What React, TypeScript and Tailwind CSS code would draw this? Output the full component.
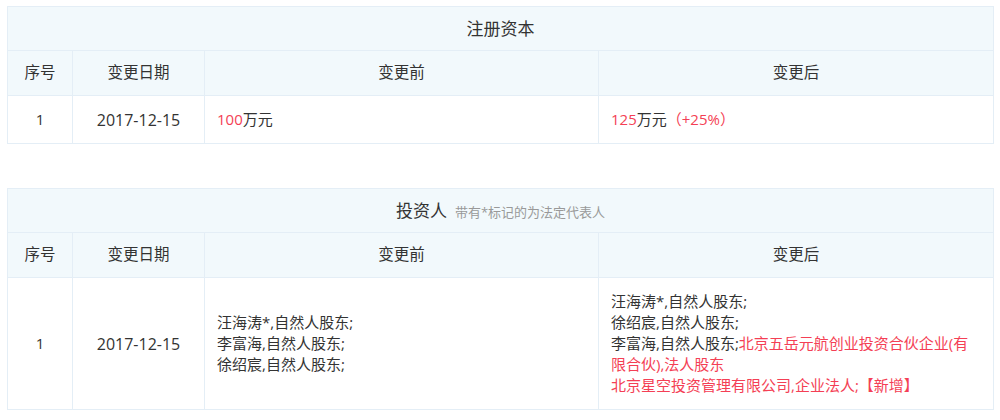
const RED = "text-[#f43f55]";

type Column = { label: string; width: string };

const columns: Column[] = [
    { label: "序号", width: "w-[65px]" },
    { label: "变更日期", width: "w-[132px]" },
    { label: "变更前", width: "w-[394px]" },
    { label: "变更后", width: "w-[395px]" },
];

function ChangeTable({
    title,
    note,
    before,
    after,
    bodyHeight,
}: {
    title: string;
    note?: string;
    before: React.ReactNode;
    after: React.ReactNode;
    bodyHeight: string;
}) {
    return (
        <table className="w-[986px] table-fixed border-collapse text-[15px] text-[#333]">
            <colgroup>
                {columns.map((c) => (
                    <col key={c.label} className={c.width} />
                ))}
            </colgroup>
            <thead>
                <tr className="h-[44px] bg-[#f2f9fc]">
                    <th colSpan={4} className="border border-[#e4eef6] text-center font-normal">
                        <span className="text-[17px] text-[#333]">{title}</span>
                        {note && <span className="ml-[8px] text-[13px] text-[#999]">{note}</span>}
                    </th>
                </tr>
                <tr className="h-[45px] bg-[#f2f9fc]">
                    {columns.map((c) => (
                        <th key={c.label} className="border border-[#e4eef6] text-center font-normal text-[15.5px] text-[#333]">
                            {c.label}
                        </th>
                    ))}
                </tr>
            </thead>
            <tbody>
                <tr className={bodyHeight}>
                    <td className="border border-[#e4eef6] text-center">1</td>
                    <td className="border border-[#e4eef6] text-center text-[16px]">2017-12-15</td>
                    <td className="border border-[#e4eef6] px-3 leading-[21px]">{before}</td>
                    <td className="whitespace-nowrap border border-[#e4eef6] px-3 leading-[21px]">{after}</td>
                </tr>
            </tbody>
        </table>
    );
}

export default function App() {
    return (
        <div
            className="flex min-h-[420px] w-[1000px] flex-col gap-[44px] bg-white px-[7px] pt-[6px]"
            style={{ fontFamily: '"Open Sans", "Noto Sans CJK SC", sans-serif' }}
        >
            <ChangeTable
                title="注册资本"
                bodyHeight="h-[48px]"
                before={
                    <>
                        <span className={RED}>100</span>万元
                    </>
                }
                after={
                    <>
                        <span className={RED}>125</span>万元<span className={RED}>（+25%）</span>
                    </>
                }
            />
            <ChangeTable
                title="投资人"
                note="带有*标记的为法定代表人"
                bodyHeight="h-[132px]"
                before={
                    <>
                        汪海涛*,自然人股东;
                        <br />
                        李富海,自然人股东;
                        <br />
                        徐绍宸,自然人股东;
                    </>
                }
                after={
                    <>
                        汪海涛*,自然人股东;
                        <br />
                        徐绍宸,自然人股东;
                        <br />
                        李富海,自然人股东;<span className={RED}>北京五岳元航创业投资合伙企业(有</span>
                        <br />
                        <span className={RED}>限合伙),法人股东</span>
                        <br />
                        <span className={RED}>北京星空投资管理有限公司,企业法人;【新增】</span>
                    </>
                }
            />
        </div>
    );
}
